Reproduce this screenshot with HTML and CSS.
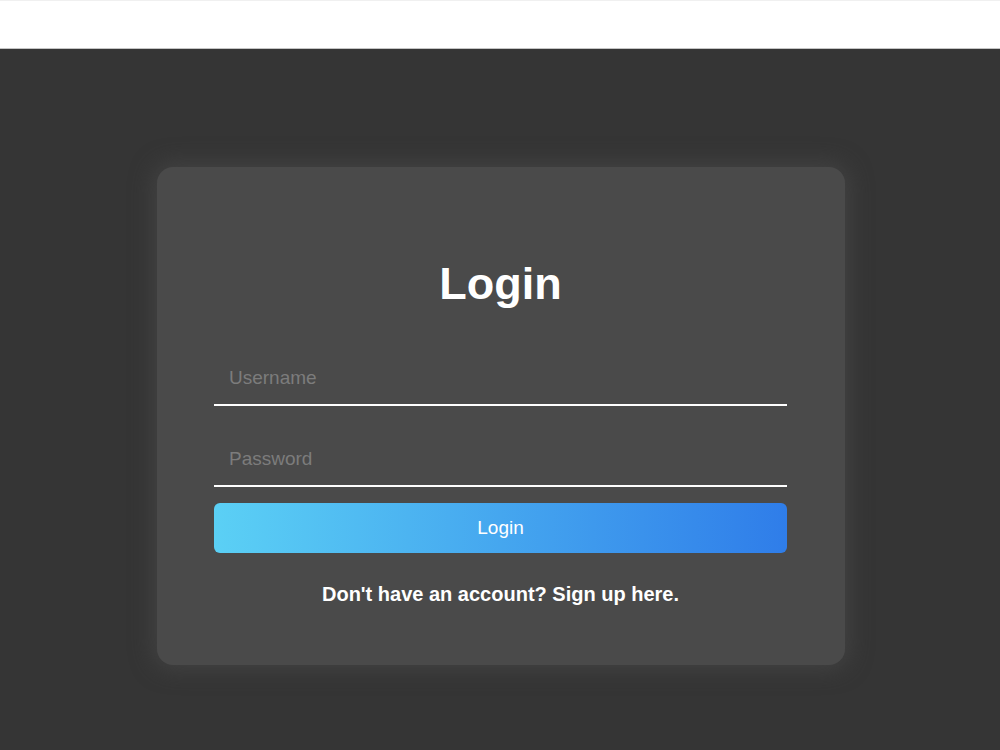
FILE: index.html
```html
<!DOCTYPE html>
<html lang="en">
<head>
<meta charset="utf-8">
<title>Login</title>
<link rel="stylesheet" href="styles.css">
</head>
<body>
<header class="topbar"></header>
<main class="stage">
  <form class="card">
    <h1 class="title">Login</h1>
    <input class="field field-user" type="text" placeholder="Username">
    <input class="field field-pass" type="password" placeholder="Password">
    <button class="btn" type="button">Login</button>
    <a class="signup" href="#">Don't have an account? Sign up here.</a>
  </form>
</main>
</body>
</html>
```
FILE: styles.css
```css
* { box-sizing: border-box; }
html, body { margin: 0; padding: 0; }
body {
  font-family: "Liberation Sans", Arial, sans-serif;
  background: #353535;
  width: 1000px;
  height: 750px;
  overflow: hidden;
}
.topbar {
  height: 49px;
  background: #ffffff;
  border-top: 1px solid #f0f0f0;
  border-bottom: 1px solid #c4c4c4;
}
.stage {
  background: #353535;
  height: 701px;
  padding-top: 118px;
}
.card {
  width: 688px;
  height: 498px;
  margin: 0 auto;
  transform: translateX(1px);
  background: #4a4a4a;
  border-radius: 16px;
  box-shadow: 0 0 22px 4px rgba(72, 72, 72, 0.7);
  padding: 91px 58px 0 57px;
  display: flex;
  flex-direction: column;
}
.title {
  margin: 0;
  font-size: 45px;
  line-height: 52px;
  font-weight: bold;
  color: #ffffff;
  text-align: center;
}
.field {
  display: block;
  width: 100%;
  height: 54px;
  margin: 0;
  padding: 0 15px;
  border: none;
  border-bottom: 2px solid #ffffff;
  background: transparent;
  color: #ffffff;
  font-family: inherit;
  font-size: 19px;
  outline: none;
}
.field::placeholder { color: #7c7c7c; }
.field-user { margin-top: 42px; }
.field-pass { margin-top: 27px; }
.btn {
  margin-top: 16px;
  height: 50px;
  width: 100%;
  border: none;
  border-radius: 6px;
  background: linear-gradient(to right, #5bd0f5, #2f7de9);
  color: #ffffff;
  font-family: inherit;
  font-size: 19px;
  cursor: pointer;
}
.signup {
  margin-top: 30px;
  text-align: center;
  color: #ffffff;
  font-weight: bold;
  font-size: 20px;
  line-height: 23px;
  text-decoration: none;
}
```
